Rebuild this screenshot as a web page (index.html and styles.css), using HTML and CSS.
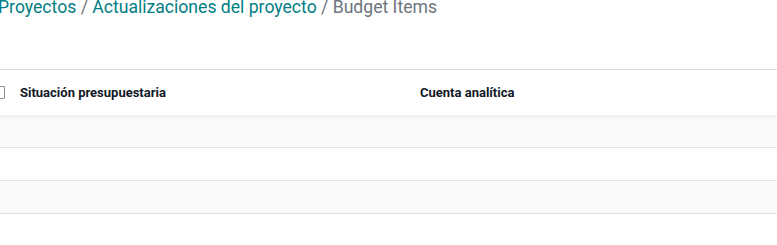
FILE: index.html
```html
<!DOCTYPE html>
<html lang="es">
<head>
  <meta charset="UTF-8" />
  <title>Budget Items</title>
  <link rel="stylesheet" href="styles.css">
</head>
<body>

  <!-- Breadcrumb -->
  <div class="breadcrumb">
    <a>Proyectos</a> <span class="sep">/</span> <a>Actualizaciones del proyecto</a> <span class="sep">/</span> <span class="current">Budget Items</span>
  </div>

  <!-- List view -->
  <div class="list">
    <div class="list-row list-head">
      <div class="cell sel"><span class="check"></span></div>
      <div class="cell">Situación presupuestaria</div>
      <div class="cell">Cuenta analítica</div>
    </div>
    <div class="list-row odd"></div>
    <div class="list-row"></div>
    <div class="list-row odd"></div>
  </div>

</body>
</html>
```

FILE: styles.css
```css
/* Base */
* {
  margin: 0;
  padding: 0;
  box-sizing: border-box;
}

body {
  font-family: Roboto, "Noto Sans", sans-serif;
  background-color: #fff;
  color: #212529;
  overflow: hidden;
}

/* Breadcrumb */
.breadcrumb {
  font-size: 17.6px;
  line-height: 21px;
  margin-top: -3px;
  margin-left: -2px;
  color: #017e84;
  white-space: nowrap;
}

.breadcrumb a {
  color: #017e84;
  text-decoration: none;
}

.breadcrumb .sep,
.breadcrumb .current {
  color: #6c757d;
}

/* List */
.list {
  margin-top: 51px;
  margin-left: -16px;
  border-top: 1px solid #d8dadd;
}

.list-row {
  display: grid;
  grid-template-columns: 28px 400px 1fr;
  height: 33px;
  border-bottom: 1px solid #dee2e6;
}

.list-row.odd {
  background-color: #fafafa;
}

.list-head {
  height: 45px;
  border-bottom: none;
  background-color: #fff;
  position: relative;
  z-index: 1;
  box-shadow: 0 2px 4px rgba(0, 0, 0, 0.06);
  font-size: 13px;
  font-weight: bold;
  color: #111827;
}

.cell {
  display: flex;
  align-items: center;
  padding-left: 8px;
}

.check {
  width: 13px;
  height: 13px;
  border: 1px solid #8f8f8f;
  border-radius: 1px;
  background: #fff;
}
```
